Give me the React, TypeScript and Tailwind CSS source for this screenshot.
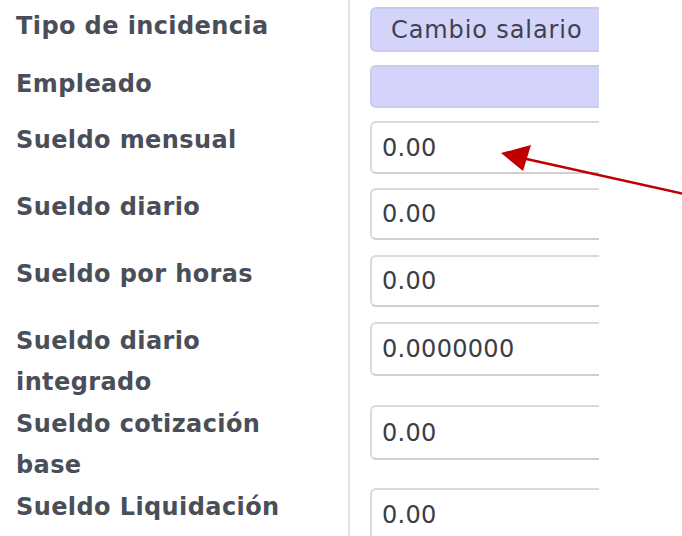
const rows = [
  { label: 'Tipo de incidencia', value: 'Cambio salario', kind: 'select', h: 'h-[58px]', fh: 'h-[45px]' },
  { label: 'Empleado', value: '', kind: 'select', h: 'h-[56px]', fh: 'h-[43px]' },
  { label: 'Sueldo mensual', value: '0.00', kind: 'input', h: 'h-[67px]', fh: 'h-[53px]' },
  { label: 'Sueldo diario', value: '0.00', kind: 'input', h: 'h-[67px]', fh: 'h-[52px]' },
  { label: 'Sueldo por horas', value: '0.00', kind: 'input', h: 'h-[67px]', fh: 'h-[52px]' },
  { label: 'Sueldo diario integrado', value: '0.0000000', kind: 'input', h: 'h-[83px]', fh: 'h-[54px]' },
  { label: 'Sueldo cotización base', value: '0.00', kind: 'input', h: 'h-[83px]', fh: 'h-[55px]' },
  { label: 'Sueldo Liquidación', value: '0.00', kind: 'input', h: 'h-[55px]', fh: 'h-[54px]' },
];

export default function App() {
  return (
    <div
      className="relative w-[682px] h-[536px] overflow-hidden bg-white"
      style={{ fontFamily: '"DejaVu Sans", Verdana, sans-serif' }}
    >
      <div className="flex h-full">
        <div className="w-[348px] shrink-0">
          {rows.map(r => (
            <div key={r.label} className={`${r.h} pl-[16px] pt-[6px]`}>
              <div className="w-[300px] text-[24px] leading-[41px] font-bold tracking-[0.4px] text-[#4a4e58]">{r.label}</div>
            </div>
          ))}
        </div>
        <div className="w-[2px] shrink-0 bg-[#e2e2e2]" />
        <div className="w-[249px] shrink-0 pl-[20px]">
          {rows.map(r => (
            <div key={r.label} className={`${r.h} pt-[7px]`}>
              {r.kind === 'select' ? (
                <div className={`${r.fh} flex items-center pl-[19px] rounded-l-[6px] bg-[#d4d4fb] border-2 border-r-0 border-[#cacaee] text-[24px] tracking-[0.9px] text-[#3d4150] whitespace-nowrap overflow-hidden`}>
                  {r.value}
                </div>
              ) : (
                <div className={`${r.fh} flex items-center pl-[10px] rounded-l-[6px] bg-white border-2 border-r-0 border-[#dadada] border-b-[#cfcfcf] text-[24px] tracking-[0.3px] text-[#3a3e48] whitespace-nowrap overflow-hidden`}>
                  {r.value}
                </div>
              )}
            </div>
          ))}
        </div>
        <div className="flex-1" />
      </div>
      <svg className="absolute left-0 top-0 pointer-events-none" width="682" height="536">
        <line x1="684" y1="194" x2="522" y2="158" stroke="#c00000" strokeWidth="2.5" />
        <polygon points="501,153 531,145 523,171" fill="#c00000" />
      </svg>
    </div>
  );
}
